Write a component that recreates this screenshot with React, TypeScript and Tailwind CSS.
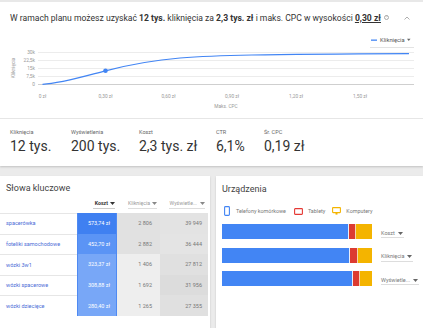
import React from "react";

const font = { fontFamily: "Roboto, 'Noto Sans', Arial, sans-serif" };

function Tri({ className = "" }: { className?: string }) {
  return (
    <svg width="5" height="3" viewBox="0 0 5 3" className={className}>
      <path d="M0 0 L5 0 L2.5 3 Z" fill="currentColor" />
    </svg>
  );
}

function Chart() {
  const gx = [22, 30, 38, 46, 54];
  const gl = ["30k", "22,5k", "15k", "7,5k", "0"];
  const xl = [
    [42.5, "0 zł"],
    [105.5, "0,30 zł"],
    [168.5, "0,60 zł"],
    [232, "0,90 zł"],
    [296, "1,20 zł"],
    [360, "1,50 zł"],
  ] as const;
  return (
    <svg width="423" height="87" viewBox="0 0 423 87" className="block">
      <rect x="371" y="9.5" width="6" height="1.3" fill="#4285f4" />
      <text x="380" y="12" fontSize="5.8" fill="#555">Kliknięcia</text>
      <path d="M407 8.8 L410.5 8.8 L408.75 11 Z" fill="#666" />
      <line x1="370" y1="17.5" x2="414" y2="17.5" stroke="#e3e3e3" strokeWidth="1" />
      {gx.map((y, i) => (
        <g key={y}>
          <line x1="38" y1={y + 0.5} x2="414" y2={y + 0.5} stroke={i === 4 ? "#cfcfcf" : "#ececec"} strokeWidth="1" />
          <text x="35" y={y + 2} fontSize="4.8" fill="#999" textAnchor="end">{gl[i]}</text>
        </g>
      ))}
      <text x="0" y="0" fontSize="4.8" fill="#999" textAnchor="middle" transform="translate(14.5 38) rotate(-90)">Kliknięcia</text>
      {xl.map(([x, t]) => (
        <text key={t} x={x} y="68" fontSize="4.8" fill="#999" textAnchor="middle">{t}</text>
      ))}
      <text x="226" y="78" fontSize="4.8" fill="#999" textAnchor="middle">Maks. CPC</text>
      <path
        d="M42.5 54.3 C 60 53.5, 80 47.5, 105.5 40.8 C 130 34.5, 150 30.5, 180 28 C 215 25.3, 260 24.2, 409 23.6"
        fill="none"
        stroke="#4285f4"
        strokeWidth="1.2"
      />
      <circle cx="105.5" cy="40.8" r="2.3" fill="#4285f4" />
    </svg>
  );
}

const stats = [
  ["Kliknięcia", "12 tys.", "w-[61px]"],
  ["Wyświetlenia", "200 tys.", "w-[68px]"],
  ["Koszt", "2,3 tys. zł", "w-[77px]"],
  ["CTR", "6,1%", "w-[48px]"],
  ["Śr. CPC", "0,19 zł", "w-[60px]"],
] as const;

const rows = [
  ["spacerówka", "573,74 zł", "2 806", "39 949", "bg-[#3f80f1]", "bg-[#e1e1e1]", "bg-[#e3e3e3]"],
  ["foteliki samochodowe", "452,70 zł", "2 882", "36 444", "bg-[#5b94f5]", "bg-[#e1e1e1]", "bg-[#e4e4e4]"],
  ["wózki 3w1", "323,37 zł", "1 406", "27 812", "bg-[#78a7f7]", "bg-[#eeeeee]", "bg-[#e0e0e0]"],
  ["wózki spacerowe", "308,88 zł", "1 692", "31 956", "bg-[#78a7f7]", "bg-[#eeeeee]", "bg-[#dcdcdc]"],
  ["wózki dziecięce", "280,40 zł", "1 265", "27 355", "bg-[#78a7f7]", "bg-[#eeeeee]", "bg-[#e0e0e0]"],
] as const;

const bars = [
  ["Koszt", 126, 6, 16],
  ["Kliknięcia", 127, 6.5, 15],
  ["Wyświetle...", 130, 5.5, 13],
] as const;

export default function App() {
  return (
    <div className="w-[423px] h-[328px] overflow-hidden bg-[#ebebeb] text-[#333]" style={font}>
      <div className="bg-white border-t-2 border-[#e8e8e8] shadow-[0_1px_2px_rgba(0,0,0,0.18)]">
        <div className="h-[28px] flex items-center pl-[10px] pr-[10px] pt-[4px]">
          <div className="text-[8.6px] text-[#333] whitespace-nowrap flex items-center">
            <span>
              W ramach planu możesz uzyskać <b className="font-bold">12 tys.</b> kliknięcia za{" "}
              <b className="font-bold">2,3 tys. zł</b> i maks. CPC w wysokości{" "}
              <b className="font-bold underline">0,30 zł</b>
            </span>
            <span className="ml-[3px] w-[5px] h-[5px] rounded-full border border-[#aaa] text-[3.5px] leading-none flex items-center justify-center text-[#999]">?</span>
          </div>
          <div className="ml-auto mr-[3px]">
            <svg width="6" height="4" viewBox="0 0 6 4">
              <path d="M0.5 3.5 L3 1 L5.5 3.5" fill="none" stroke="#999" strokeWidth="0.8" />
            </svg>
          </div>
        </div>
        <Chart />
        <div className="h-[1px] bg-[#e6e6e6] mt-[1px]" />
        <div className="h-[47px] flex pl-[10px] pt-[9px]">
          {stats.map(([l, v, w]) => (
            <div key={l} className={`${w} flex flex-col`}>
              <div className="text-[5.5px] text-[#666] leading-[8px]">{l}</div>
              <div className="text-[14px] text-[#333] leading-[18px] mt-[1px] whitespace-nowrap">{v}</div>
            </div>
          ))}
        </div>
      </div>

      <div className="flex gap-[6px] mt-[10px] h-[160px]">
        <div className="w-[210px] bg-white shadow-[0_1px_2px_rgba(0,0,0,0.15)]">
          <div className="h-[23px] flex items-center pl-[6px] pt-[3px] text-[9px] text-[#444]">Słowa kluczowe</div>
          <div className="h-[10px] flex text-[5.2px]">
            <div className="w-[77px]" />
            <div className="w-[40px] flex justify-end pr-[2px]">
              <div className="flex items-center gap-[2px] border-b border-[#ccc] h-[10px] pl-[2px] font-bold text-[#333]">
                Koszt <Tri className="text-[#333]" />
              </div>
            </div>
            <div className="w-[43px] flex justify-end pr-[3px]">
              <div className="flex items-center gap-[2px] border-b border-[#ddd] h-[10px] text-[#999]">
                Kliknięcia <Tri className="text-[#888]" />
              </div>
            </div>
            <div className="w-[48px] flex justify-end pr-[3px]">
              <div className="flex items-center gap-[3px] border-b border-[#ddd] h-[10px] text-[#999] pl-[1px]">
                Wyświetle... <Tri className="text-[#888]" />
              </div>
            </div>
          </div>
          <div className="mt-[4px] border-t border-[#e6e6e6] w-[77px]" />
          <div className="flex flex-col -mt-[1px]">
            {rows.map(([k, c, cl, w, cb, clb, wb], i) => (
              <div key={k} className="flex h-[20.6px] text-[5.5px]">
                <div className={`w-[77px] flex items-center pl-[6px] text-[#4a6bd6] ${i > 0 ? "border-t border-[#e6e6e6]" : ""}`}>{k}</div>
                <div className={`w-[40px] ${cb} flex items-center justify-end pr-[6px] text-white border-x border-[#4f8af2]`}>{c}</div>
                <div className={`w-[43px] ${clb} flex items-center justify-end pr-[8px] text-[#777]`}>{cl}</div>
                <div className={`w-[48px] ${wb} flex items-center justify-end pr-[6px] text-[#777]`}>{w}</div>
              </div>
            ))}
          </div>
        </div>

        <div className="flex-1 bg-white shadow-[0_1px_2px_rgba(0,0,0,0.15)]">
          <div className="h-[27px] flex items-center pl-[6px] pt-[1px] text-[9px] text-[#444]">Urządzenia</div>
          <div className="flex items-center h-[16px] pl-[8px] text-[5.4px] text-[#777]">
            <svg width="6" height="10" viewBox="0 0 6 10">
              <rect x="0.6" y="0.6" width="4.8" height="8.8" rx="0.9" fill="none" stroke="#4285f4" strokeWidth="1.1" />
            </svg>
            <span className="ml-[6px]">Telefony komórkowe</span>
            <svg width="9" height="7" viewBox="0 0 9 7" className="ml-[8px]">
              <rect x="0.6" y="0.6" width="7.8" height="5.8" rx="0.6" fill="none" stroke="#e53935" strokeWidth="1.1" />
            </svg>
            <span className="ml-[5px]">Tablety</span>
            <svg width="9" height="8" viewBox="0 0 9 8" className="ml-[7px]">
              <rect x="0.6" y="0.6" width="7.8" height="5" rx="0.5" fill="none" stroke="#f4b400" strokeWidth="1.1" />
              <rect x="3.5" y="5.6" width="2" height="2" fill="#f4b400" />
            </svg>
            <span className="ml-[5px]">Komputery</span>
          </div>
          <div className="flex flex-col gap-[8.5px] mt-[5px]">
            {bars.map(([label, b, r]) => (
              <div key={label} className="flex items-center">
                <div className="ml-[6px] w-[150px] h-[15px] flex">
                  <div className="bg-[#4285f4] h-full" style={{ width: b }} />
                  <div className="bg-[#e8eefa] w-[1px] h-full" />
                  <div className="bg-[#dc3b31] h-full" style={{ width: r }} />
                  <div className="bg-[#f3d3b0] w-[1px] h-full" />
                  <div className="bg-[#f4b400] h-full flex-1" />
                </div>
                <div className="ml-[9px] mt-[4px] flex items-center gap-[3px] border-b border-[#ddd] h-[9px] text-[5.5px] text-[#777] pr-[1px]">
                  {label} <Tri className="text-[#666]" />
                </div>
              </div>
            ))}
          </div>
        </div>
      </div>
    </div>
  );
}
